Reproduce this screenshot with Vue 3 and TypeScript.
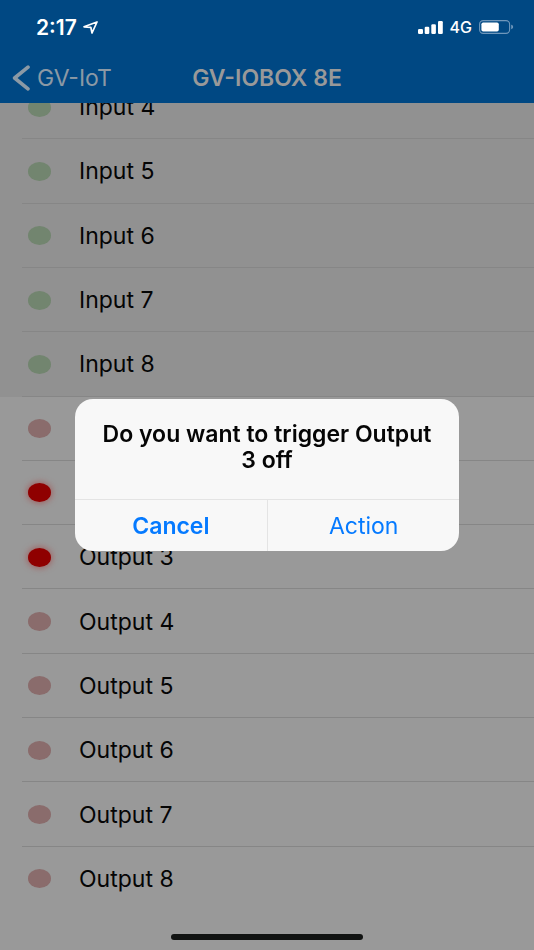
<script setup lang="ts">
interface Channel {
  name: string
  kind: 'input' | 'output'
  active: boolean
}

const channels: Channel[] = [
  ...[4, 5, 6, 7, 8].map((n): Channel => ({ name: `Input ${n}`, kind: 'input', active: false })),
  ...[1, 2, 3, 4, 5, 6, 7, 8].map((n): Channel => ({
    name: `Output ${n}`,
    kind: 'output',
    active: n === 2 || n === 3,
  })),
]
</script>

<template>
  <div class="screen">
    <header class="top">
      <div class="status">
        <div class="clock">
          <span>2:17</span>
          <svg width="15" height="13" viewBox="0 0 15 13" aria-hidden="true">
            <path d="M1 5.8 14 1 9 12 7.8 6.3Z" fill="none" stroke="#fff" stroke-width="1.7" stroke-linejoin="round" />
          </svg>
        </div>
        <div class="signals">
          <svg width="25" height="13" viewBox="0 0 25 13" aria-hidden="true">
            <g fill="#fff">
              <rect x="0" y="8" width="5" height="5" rx="1.2" />
              <rect x="6.7" y="5.7" width="4.6" height="7.3" rx="1.2" />
              <rect x="13.3" y="3.2" width="4.6" height="9.8" rx="1.2" />
              <rect x="20" y="0" width="4.8" height="13" rx="1.2" />
            </g>
          </svg>
          <span class="network">4G</span>
          <svg width="35" height="14" viewBox="0 0 35 14" aria-hidden="true">
            <rect x="0.6" y="0.6" width="30" height="12.8" rx="3.6" fill="none" stroke="#6f97bb" stroke-width="1.1" />
            <rect x="2.4" y="2.4" width="17.4" height="9.2" rx="1.8" fill="#fff" />
            <path d="M32.2 4.8c2.6.6 2.6 3.8 0 4.4Z" fill="#6f97bb" />
          </svg>
        </div>
      </div>
      <nav class="nav">
        <a class="back" href="#">
          <svg width="18" height="26" viewBox="0 0 18 26" aria-hidden="true">
            <path d="M16 2.2 2.6 13 16 23.8" fill="none" stroke="currentColor" stroke-width="3.6" stroke-linecap="round" stroke-linejoin="round" />
          </svg>
          <span>GV-IoT</span>
        </a>
        <h1 class="title">GV-IOBOX 8E</h1>
      </nav>
    </header>

    <ul class="list">
      <li v-for="c in channels" :key="c.name" class="row" :class="c.kind">
        <span class="lamp" :class="{ on: c.active }"></span>
        <span class="name">{{ c.name }}</span>
      </li>
    </ul>

    <footer class="bottom"><div class="home"></div></footer>

    <div class="overlay">
      <div class="dialog" role="alertdialog" aria-labelledby="question">
        <h2 id="question" class="question">Do you want to trigger Output 3 off</h2>
        <div class="actions">
          <button type="button" class="cancel">Cancel</button>
          <button type="button">Action</button>
        </div>
      </div>
    </div>
  </div>
</template>

<style>
body {
  background: #999;
}
</style>

<style scoped>
.screen {
  display: flex;
  flex-direction: column;
  min-height: 100vh;
  background: #999;
  color: #050505;
  font-family: Inter, "Liberation Sans", sans-serif;
  font-size: 23px;
}

.top {
  position: relative;
  z-index: 1;
  background: #004883;
}

.status {
  display: flex;
  align-items: center;
  justify-content: space-between;
  height: 52px;
  padding: 2px 20px 0 36px;
  box-sizing: border-box;
  color: #fff;
}

.clock {
  display: flex;
  align-items: center;
  gap: 6px;
  font-size: 21px;
  font-weight: 600;
}

.signals {
  display: flex;
  align-items: center;
  gap: 7px;
}

.network {
  font-size: 16px;
  font-weight: 500;
}

.nav {
  display: grid;
  grid-template-columns: 1fr auto 1fr;
  align-items: center;
  height: 51px;
  padding: 0 12px;
  color: #999;
}

.back {
  display: flex;
  align-items: center;
  gap: 7px;
  color: #8b99a5;
  text-decoration: none;
}

.title {
  margin: 0;
  font-size: 23px;
  font-weight: 600;
}

/* The first row is scrolled partly under the header. */
.list {
  display: grid;
  flex: 1;
  grid-auto-rows: 1fr;
  margin: -28px 0 0;
  padding: 0;
  list-style: none;
}

.row {
  display: flex;
  align-items: center;
  gap: 28px;
  min-height: 64px;
  padding-left: 28px;
  box-sizing: border-box;
  background: linear-gradient(#868686, #868686) 22px 100% / 100% 1px no-repeat;
}

.row.input {
  background-color: #919191;
}

.row:last-child {
  background: none;
}

.lamp {
  width: 23px;
  height: 19px;
  border-radius: 50%;
  background: #8a6c6c;
}

.input .lamp {
  background: #72856f;
}

.lamp.on {
  background: #8f0000;
  box-shadow: 0 0 6px 1px #a06060;
}

.bottom {
  display: flex;
  align-items: flex-end;
  justify-content: center;
  height: 39px;
  padding-bottom: 10px;
  box-sizing: border-box;
}

.home {
  width: 36%;
  height: 6px;
  border-radius: 3px;
  background: #111312;
}

.overlay {
  position: fixed;
  inset: 0;
  z-index: 2;
  display: grid;
  place-items: center;
}

.dialog {
  width: 72%;
  overflow: hidden;
  border-radius: 18px;
  background: #f8f8f8;
}

.question {
  margin: 0;
  padding: 22px 20px 26px;
  font-size: 23px;
  font-weight: 600;
  line-height: 26px;
  text-align: center;
}

.actions {
  display: grid;
  grid-template-columns: 1fr 1fr;
  border-top: 1px solid #e4e4e4;
}

.actions button {
  height: 51px;
  padding: 0;
  border: 0;
  background: none;
  color: #057aff;
  font: inherit;
}

.actions button + button {
  border-left: 1px solid #e4e4e4;
}

.actions .cancel {
  font-weight: 600;
}
</style>
